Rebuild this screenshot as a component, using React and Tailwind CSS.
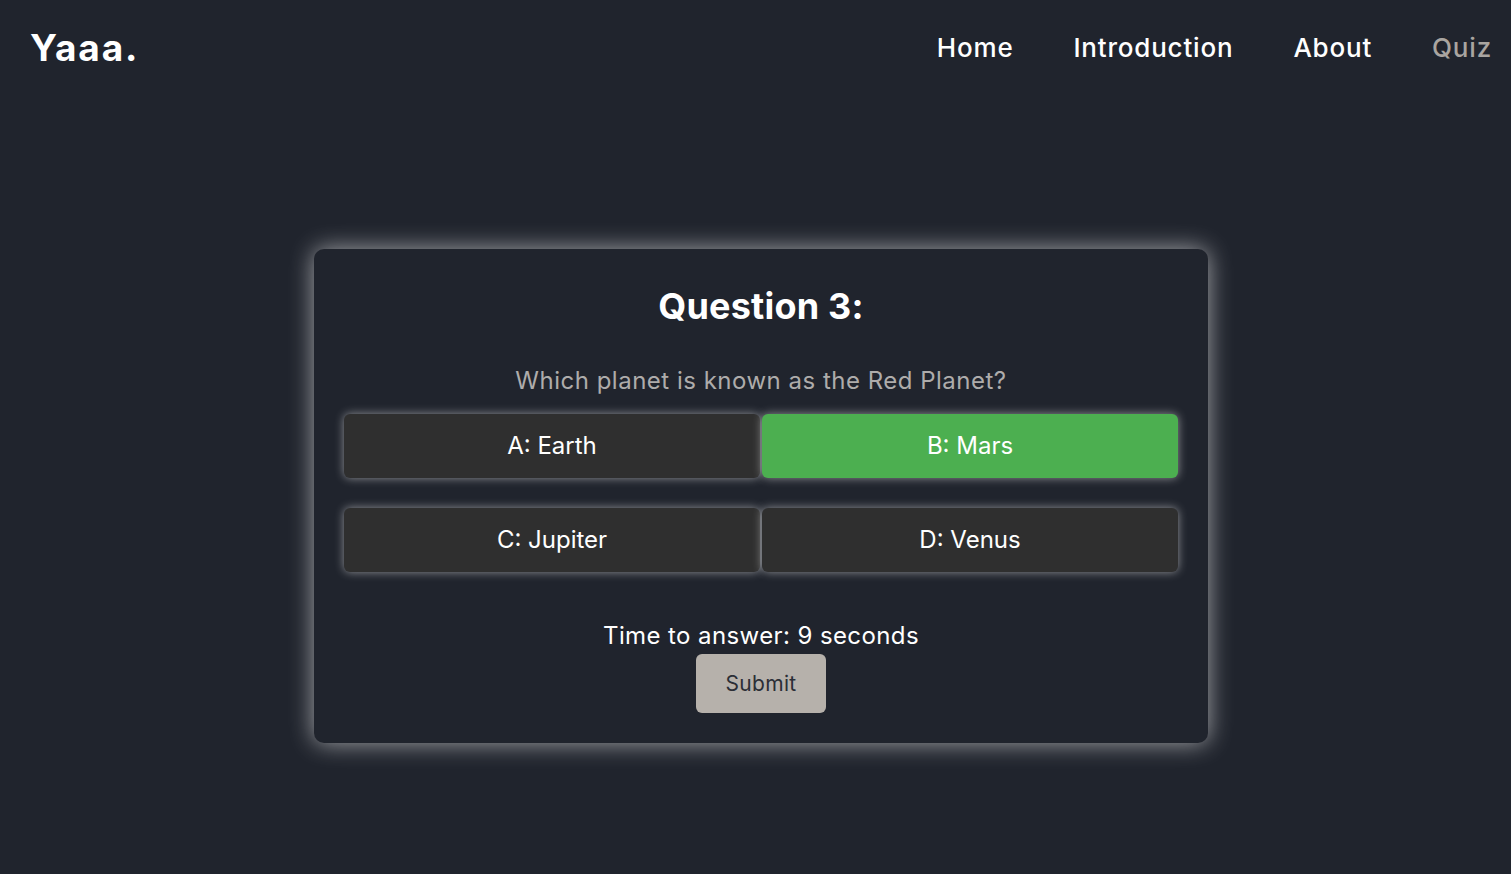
export default function App() {
  const options = [
    { label: "A: Earth", selected: false },
    { label: "B: Mars", selected: true },
    { label: "C: Jupiter", selected: false },
    { label: "D: Venus", selected: false },
  ];
  return (
    <div
      className="min-h-screen w-full bg-[#20242d] text-white"
      style={{ fontFamily: "Inter, 'Open Sans', sans-serif" }}
    >
      <header className="flex items-center justify-between pl-[30px] pr-[19px] h-[94px]">
        <div className="text-[37px] font-bold tracking-[1.8px] leading-none">Yaaa.</div>
        <nav className="flex items-center gap-[60px] text-[26px] font-medium tracking-[0.8px]">
          <a className="text-white">Home</a>
          <a className="text-white">Introduction</a>
          <a className="text-white">About</a>
          <a className="text-[#a9a5a0]">Quiz</a>
        </nav>
      </header>

      <main className="flex justify-center pl-[11px] pt-[155px] pb-[132px]">
        <div className="w-[894px] rounded-[10px] bg-[#20242d] shadow-[0_0_25px_rgba(255,255,255,0.6)] px-[30px] pt-[36px] pb-[30px] flex flex-col items-center">
          <h2 className="text-[36px] font-bold leading-[43px] tracking-[0.2px]">Question 3:</h2>
          <p className="mt-[35px] text-[24px] leading-[36px] text-[#aeacab] tracking-[0.5px]">
            Which planet is known as the Red Planet?
          </p>
          <div className="mt-[15px] grid w-full grid-cols-2 gap-x-[2px] gap-y-[30px]">
            {options.map((o) => (
              <button
                key={o.label}
                className={
                  o.selected
                    ? "h-[64px] rounded-[6px] bg-[#4caf50] text-[24px] text-white shadow-[0_0_10px_rgba(255,255,255,0.5)]"
                    : "h-[64px] rounded-[6px] bg-[#2f2f2f] text-[24px] text-white shadow-[0_0_10px_rgba(255,255,255,0.5)]"
                }
              >
                {o.label}
              </button>
            ))}
          </div>
          <p className="mt-[46px] text-[24px] leading-[36px] text-white tracking-[0.4px]">
            Time to answer: 9 seconds
          </p>
          <button className="w-[130px] h-[59px] rounded-[6px] bg-[#b6b1ab] text-[21px] text-[#2b2e36] tracking-[0.3px]">
            Submit
          </button>
        </div>
      </main>
    </div>
  );
}
